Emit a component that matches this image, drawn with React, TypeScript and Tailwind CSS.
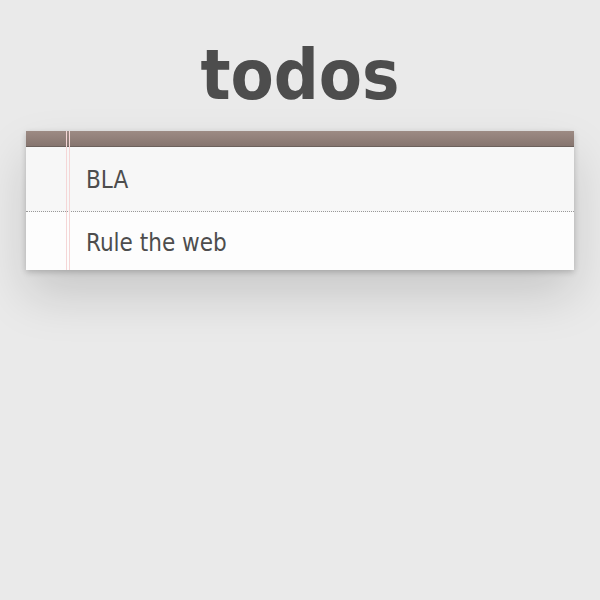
export default function App() {
  return (
    <div
      className="min-h-[600px] w-full bg-[#eaeaea] text-[#4d4d4d] flex flex-col items-center"
      style={{ fontFamily: '"DejaVu Sans Condensed", "DejaVu Sans", sans-serif' }}
    >
      <h1 className="mt-[40px] h-[70px] text-[70px] leading-[70px] font-bold text-[#4d4d4d] text-center">
        todos
      </h1>
      <div className="relative mt-[21px] w-[548px] bg-white/90 shadow-[0_2px_6px_0_rgba(0,0,0,0.2),0_25px_50px_0_rgba(0,0,0,0.15)]">
        <div className="absolute left-[40px] top-0 h-full w-[4px] border-l border-r border-[#f5d6d6] z-10" />
        <div className="h-[16px] border-b border-[#6c615c] bg-gradient-to-b from-[#9d8b84] to-[#86756f]" />
        <div className="h-[65px] bg-[#f7f7f7] border-b border-dotted border-[#999] flex items-center pl-[60px] pt-[1px] text-[24px]">
          BLA
        </div>
        <div className="h-[58px] bg-[#fdfdfd] flex items-center pl-[60px] pt-[3px] text-[24px]">
          Rule the web
        </div>
      </div>
    </div>
  );
}
